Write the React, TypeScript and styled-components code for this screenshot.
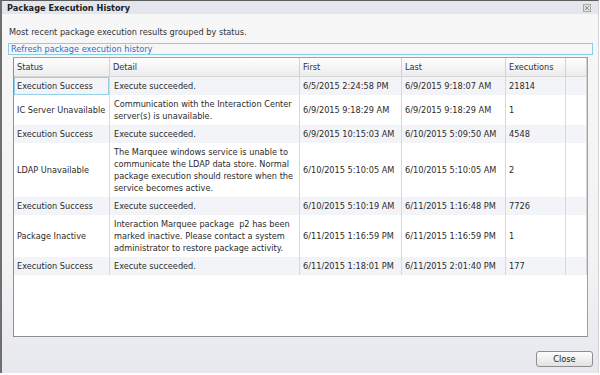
import React from 'react';
import styled, { createGlobalStyle } from 'styled-components';

interface ExecutionRow {
  status: string;
  detail: string[];
  first: string;
  last: string;
  executions: string;
  selected?: boolean;
}

const rows: ExecutionRow[] = [
  {
    status: 'Execution Success',
    detail: ['Execute succeeded.'],
    first: '6/5/2015 2:24:58 PM',
    last: '6/9/2015 9:18:07 AM',
    executions: '21814',
    selected: true,
  },
  {
    status: 'IC Server Unavailable',
    detail: ['Communication with the Interaction Center', 'server(s) is unavailable.'],
    first: '6/9/2015 9:18:29 AM',
    last: '6/9/2015 9:18:29 AM',
    executions: '1',
  },
  {
    status: 'Execution Success',
    detail: ['Execute succeeded.'],
    first: '6/9/2015 10:15:03 AM',
    last: '6/10/2015 5:09:50 AM',
    executions: '4548',
  },
  {
    status: 'LDAP Unavailable',
    detail: [
      'The Marquee windows service is unable to',
      'communicate the LDAP data store. Normal',
      'package execution should restore when the',
      'service becomes active.',
    ],
    first: '6/10/2015 5:10:05 AM',
    last: '6/10/2015 5:10:05 AM',
    executions: '2',
  },
  {
    status: 'Execution Success',
    detail: ['Execute succeeded.'],
    first: '6/10/2015 5:10:19 AM',
    last: '6/11/2015 1:16:48 PM',
    executions: '7726',
  },
  {
    status: 'Package Inactive',
    detail: [
      'Interaction Marquee package  p2 has been',
      'marked inactive. Please contact a system',
      'administrator to restore package activity.',
    ],
    first: '6/11/2015 1:16:59 PM',
    last: '6/11/2015 1:16:59 PM',
    executions: '1',
  },
  {
    status: 'Execution Success',
    detail: ['Execute succeeded.'],
    first: '6/11/2015 1:18:01 PM',
    last: '6/11/2015 2:01:40 PM',
    executions: '177',
  },
];

const headers = ['Status', 'Detail', 'First', 'Last', 'Executions', ''];

export default function App() {
  return (
    <>
      <GlobalStyle />
      <Window>
        <TitleBar>
          <Title>Package Execution History</Title>
          <CloseGlyph width="8" height="8" viewBox="0 0 8 8">
            <rect x="0.5" y="0.5" width="7" height="7" fill="#e2e2e2" stroke="#a8a8a8" />
            <path d="M2 2 L6 6 M6 2 L2 6" stroke="#8a8a8a" strokeWidth="1" />
          </CloseGlyph>
        </TitleBar>
        <Body>
          <Intro>Most recent package execution results grouped by status.</Intro>
          <RefreshLink>Refresh package execution history</RefreshLink>
          <TableFrame>
            <HeaderRow>
              {headers.map((h, i) => (
                <HeaderCell key={i}>{h}</HeaderCell>
              ))}
            </HeaderRow>
            {rows.map((r, i) => (
              <Row key={i} $alt={i % 2 === 0}>
                <Cell $selected={r.selected}>{r.status}</Cell>
                <Cell $wide>
                  <div>
                    {r.detail.map((line, j) => (
                      <Line key={j}>{line}</Line>
                    ))}
                  </div>
                </Cell>
                <Cell>{r.first}</Cell>
                <Cell>{r.last}</Cell>
                <Cell>{r.executions}</Cell>
                <Cell />
              </Row>
            ))}
          </TableFrame>
        </Body>
        <Footer>
          <CloseButton>Close</CloseButton>
        </Footer>
      </Window>
    </>
  );
}

const GlobalStyle = createGlobalStyle`
  * { box-sizing: border-box; }
  body {
    margin: 0;
    background: #ffffff;
    font-family: "DejaVu Sans", Verdana, sans-serif;
    font-size: 8.2px;
    color: #2b2b2b;
  }
`;

const COLUMNS = '96px 190px 102px 104px 60px 1fr';

const Window = styled.div`
  width: 599px;
  height: 373px;
  display: flex;
  flex-direction: column;
  border-top: 1px solid #5c5c5c;
  border-left: 2px solid #6f6f6f;
  border-right: 1px solid #d2d4da;
  background: linear-gradient(#f7f7f7 0%, #f3f3f4 70%, #e7e8ed 100%);
`;

const TitleBar = styled.div`
  height: 13px;
  display: flex;
  align-items: center;
  justify-content: space-between;
  padding: 0 7px 0 5px;
  background: #e4e6ee;
`;

const Title = styled.span`
  font-weight: bold;
  color: #222;
`;

const CloseGlyph = styled.svg`
  display: block;
`;

const Body = styled.div`
  display: flex;
  flex-direction: column;
  padding: 0 5px 0 6px;
`;

const Intro = styled.div`
  margin-top: 12px;
  padding-left: 1px;
  line-height: 12px;
  color: #333;
`;

const RefreshLink = styled.div`
  margin-top: 5px;
  height: 12px;
  line-height: 10px;
  padding-left: 2px;
  border: 1px solid #8dcde4;
  color: #2f6fd0;
`;

const TableFrame = styled.div`
  margin: 2px 0 0 5px;
  width: 575px;
  height: 280px;
  border: 1px solid #9ea2a8;
  border-left-color: #8c9096;
  border-bottom-color: #8c9096;
  background: #ffffff;
`;

const HeaderRow = styled.div`
  display: grid;
  grid-template-columns: ${COLUMNS};
  height: 19px;
  border-bottom: 1px solid #d6d6d6;
  background: linear-gradient(#ffffff, #ececec);
`;

const HeaderCell = styled.div`
  display: flex;
  align-items: center;
  padding: 0 3px;
  border-right: 1px solid #d2d2d2;
  color: #333;
`;

const Row = styled.div<{ $alt: boolean }>`
  display: grid;
  grid-template-columns: ${COLUMNS};
  background: ${(p) => (p.$alt ? '#f3f4f7' : '#ffffff')};
`;

const Cell = styled.div<{ $selected?: boolean; $wide?: boolean }>`
  display: flex;
  align-items: center;
  padding: 3px ${(p) => (p.$wide ? '4px' : '3px')};
  line-height: 12px;
  white-space: nowrap;
  border-right: 1px solid #d8d8d8;
  box-shadow: ${(p) => (p.$selected ? 'inset 0 0 0 1px #93d1e8' : 'none')};
`;

const Line = styled.div`
  white-space: pre;
`;

const Footer = styled.div`
  display: flex;
  justify-content: flex-end;
  padding: 14px 5px 0 0;
`;

const CloseButton = styled.button`
  width: 57px;
  height: 16px;
  padding: 0;
  border: 1px solid #8e8e8e;
  border-radius: 3px;
  background: linear-gradient(#fdfdfd, #e2e2e2);
  font-family: inherit;
  font-size: 8.2px;
  color: #222;
`;
